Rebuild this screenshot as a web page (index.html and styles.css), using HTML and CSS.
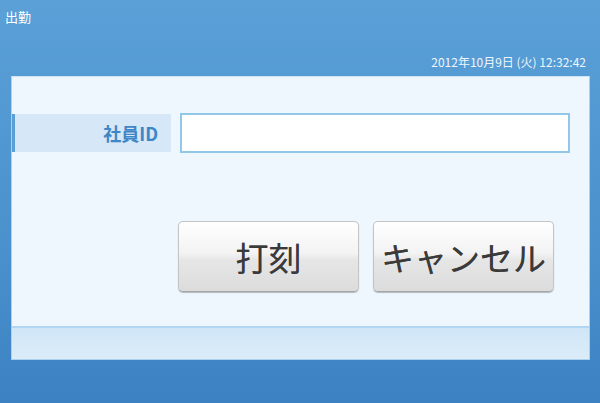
FILE: index.html
```html
<!DOCTYPE html>
<html lang="ja">
<head>
    <meta charset="UTF-8">
    <meta name="viewport" content="width=device-width, initial-scale=1.0">
    <title>出勤</title>
    <link rel="stylesheet" href="styles.css">
</head>
<body>
    <div id="screen">
        <h1 class="title">出勤</h1>
        <p class="clock">2012年10月9日 (火) 12:32:42</p>
        <div class="panel">
            <div class="form-row">
                <label class="field-label" for="emp-id">社員ID</label>
                <input class="field-input" id="emp-id" type="text">
            </div>
            <div class="actions">
                <button class="btn">打刻</button>
                <button class="btn">キャンセル</button>
            </div>
            <div class="panel-footer"></div>
        </div>
    </div>
</body>
</html>
```

FILE: styles.css
```css
body {
    margin: 0;
    font-family: "Noto Sans CJK JP", "Noto Sans", sans-serif;
}

#screen {
    width: 600px;
    height: 403px;
    box-sizing: border-box;
    padding: 0 10px 0 11px;
    background: linear-gradient(to bottom, #5ba0d7, #4a91cd 60%, #3c82c3);
    display: flex;
    flex-direction: column;
}

.title {
    margin: 0;
    padding: 7px 0 0 0;
    margin-left: -6px;
    height: 47px;
    font-size: 13px;
    font-weight: normal;
    line-height: 20px;
    color: #fff;
}

.clock {
    margin: 0;
    height: 22px;
    text-align: right;
    padding-right: 4px;
    font-size: 12px;
    line-height: 16px;
    color: #eef5fc;
}

.panel {
    height: 284px;
    box-sizing: border-box;
    background: #eef6fe;
    border: 1px solid #a9d1f0;
    border-top-color: #cfe5f7;
    display: flex;
    flex-direction: column;
}

.form-row {
    display: flex;
    align-items: center;
    margin-top: 36px;
    gap: 9px;
}

.field-label {
    width: 143px;
    height: 38px;
    border-left: 3px solid #5b9fd6;
    background: #d6e8f8;
    color: #3f86c6;
    font-weight: bold;
    font-size: 18px;
    line-height: 38px;
    text-align: right;
    padding-right: 13px;
}

.field-input {
    width: 390px;
    height: 40px;
    box-sizing: border-box;
    border: 2px solid #93c7e8;
    background: #fff;
    outline: none;
}

.actions {
    display: flex;
    gap: 14px;
    margin: 68px 0 0 166px;
}

.btn {
    width: 181px;
    height: 71px;
    border: 1px solid #c4c4c4;
    border-bottom-color: #a6a6a6;
    border-radius: 5px;
    background: linear-gradient(to bottom, #ffffff, #f3f3f3 45%, #e6e6e6 55%, #dcdcdc);
    box-shadow: 0 1px 1px rgba(0, 0, 0, 0.25);
    color: #3a3a3a;
    font-family: "Noto Sans CJK JP", sans-serif;
    font-size: 33px;
    font-weight: normal;
    text-shadow: 0 0 0.5px #666;
    padding: 0;
}

.panel-footer {
    margin-top: auto;
    height: 31px;
    border-top: 2px solid #b2d6f1;
    background: linear-gradient(to bottom, #d0e6f7, #dbecf8);
}
```
